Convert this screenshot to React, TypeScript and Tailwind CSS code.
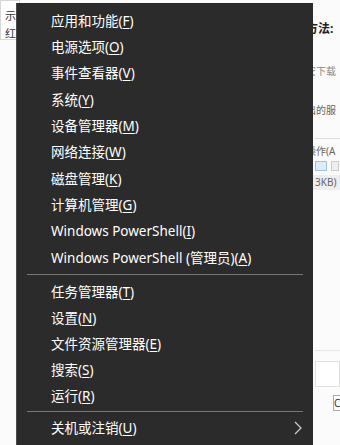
import React from "react"

type Item = { label: string; key: string }

const groups: Item[][] = [
  [
    { label: "应用和功能", key: "F" },
    { label: "电源选项", key: "O" },
    { label: "事件查看器", key: "V" },
    { label: "系统", key: "Y" },
    { label: "设备管理器", key: "M" },
    { label: "网络连接", key: "W" },
    { label: "磁盘管理", key: "K" },
    { label: "计算机管理", key: "G" },
    { label: "Windows PowerShell", key: "I" },
    { label: "Windows PowerShell (管理员)", key: "A" },
  ],
  [
    { label: "任务管理器", key: "T" },
    { label: "设置", key: "N" },
    { label: "文件资源管理器", key: "E" },
    { label: "搜索", key: "S" },
    { label: "运行", key: "R" },
  ],
]

function MenuRow({ item, tall }: { item: Item; tall?: boolean }) {
  return (
    <div
      className={`flex items-center pl-[34px] text-[13.5px] text-white ${
        tall ? "h-[26.33px]" : "h-[26px]"
      }`}
    >
      <span>
        {item.label}(<span className="underline underline-offset-2">{item.key}</span>)
      </span>
    </div>
  )
}

export default function App() {
  return (
    <div
      className="relative h-[445px] w-[340px] overflow-hidden bg-[#fbfbfb] text-[#333]"
      style={{ fontFamily: '"Noto Sans", "Noto Sans CJK SC", sans-serif' }}
    >
      {/* page behind the menu */}
      <div className="flex h-[40px] w-[20px] flex-col gap-1 overflow-hidden whitespace-nowrap border border-[#d6d6d6] bg-white pl-1 pt-2 text-[11px] leading-[14px]">
        <span>示</span>
        <span>红</span>
      </div>
      <div className="absolute left-[306px] top-0 flex h-full w-[34px] flex-col whitespace-nowrap text-[12px]">
        <div className="pt-[20px] font-bold text-[#222]">方法:</div>
        <div className="pt-[26px] text-[10px] text-[#888]">安下载</div>
        <div className="pt-[24px] text-[10px] text-[#666]">出的服</div>
        <div className="ml-[9px] mt-[20px] h-px bg-[#ddd]" />
        <div className="pt-[5px] text-[10px] text-[#666]">操作(A</div>
        <div className="ml-[9px] mt-[2px] flex gap-[4px]">
          <div className="h-[10px] w-[12px] border border-[#9cc2e2] bg-[#dcecf9]" />
          <div className="h-[10px] w-[8px] border border-[#ccc] bg-[#eee]" />
        </div>
        <div className="mt-[4px] bg-[#eee] pl-[9px] text-[10px] text-[#666]">3KB)</div>
        <div className="ml-[9px] mt-[160px] h-px bg-[#e6e6e6]" />
        <div className="ml-[9px] mt-[10px] h-[26px] border border-[#e0e0e0] bg-white" />
        <div className="ml-[27px] mt-[8px] h-[16px] w-[12px] border border-[#aaa] bg-white text-[10px] leading-[14px]">C</div>
      </div>

      {/* Win+X menu */}
      <div className="absolute left-[16px] top-[3px] h-[460px] w-[297px] border-l border-[#4a4a4a] bg-[#2b2b2b] pt-[4.8px]">
        {groups[0].map((it) => (
          <MenuRow key={it.key} item={it} tall />
        ))}
        <div className="flex h-[7.6px] items-center px-[10px]">
          <div className="h-px w-full bg-[#777]" />
        </div>
        {groups[1].map((it) => (
          <MenuRow key={it.key} item={it} />
        ))}
        <div className="flex h-[6.6px] items-center px-[10px]">
          <div className="h-px w-full bg-[#777]" />
        </div>
        <div className="flex h-[26px] items-center justify-between pl-[34px] pr-[10px] text-[13.5px] text-white">
          <span>
            关机或注销(<span className="underline underline-offset-2">U</span>)
          </span>
          <svg width="10" height="14" viewBox="0 0 10 14" fill="none" stroke="#cfcfcf" strokeWidth="1.2">
            <path d="M2 1 L8 7 L2 13" />
          </svg>
        </div>
      </div>
    </div>
  )
}
